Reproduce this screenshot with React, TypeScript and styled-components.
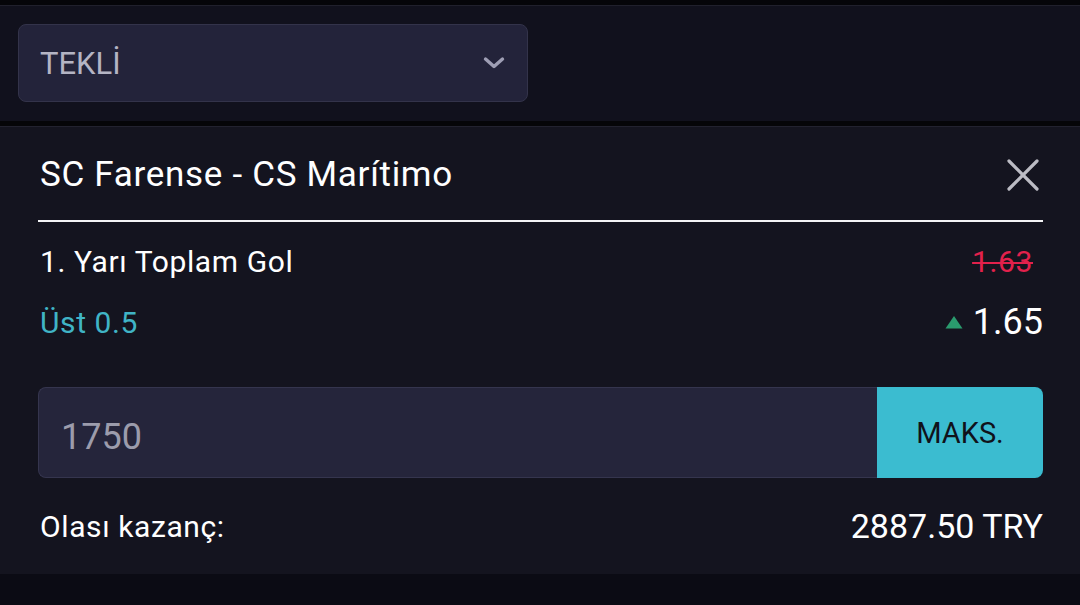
import styled, { createGlobalStyle } from "styled-components";

const GlobalStyle = createGlobalStyle`
  html, body {
    margin: 0;
    padding: 0;
    background: #0b0b14;
    font-family: Roboto, "Noto Sans", "Liberation Sans", sans-serif;
  }
`;

const Page = styled.div`
  display: flex;
  flex-direction: column;
  width: 1080px;
  height: 605px;
  background: #0b0b14;
  overflow: hidden;
`;

const TopStrip = styled.div`
  height: 5px;
  background: #050509;
`;

const Header = styled.div`
  display: flex;
  padding: 18px 18px 19px;
  background: #11111d;
  border-top: 1px solid #20202c;
`;

const Dropdown = styled.div`
  display: flex;
  align-items: center;
  justify-content: space-between;
  box-sizing: border-box;
  width: 510px;
  height: 78px;
  padding: 0 22px 0 21px;
  background: #23233a;
  border: 1px solid #33334a;
  border-radius: 8px;
  color: #b4b4c4;
  font-size: 31px;
`;

const Gap = styled.div`
  height: 5px;
  background: #050508;
`;

const Card = styled.div`
  display: flex;
  flex-direction: column;
  padding: 0 37px 29px 38px;
  background: #14141f;
  border-top: 1px solid #22222f;
`;

const TitleRow = styled.div`
  display: flex;
  align-items: center;
  justify-content: space-between;
  height: 93px;
  padding: 2px 0 0 2px;
  box-sizing: border-box;
`;

const Title = styled.div`
  color: #ffffff;
  font-size: 35px;
  letter-spacing: 0.7px;
`;

const CloseButton = styled.button`
  display: flex;
  padding: 0;
  margin-right: 4px;
  background: none;
  border: 0;
`;

const Divider = styled.div`
  height: 2px;
  background: #f4f4f6;
`;

const Row = styled.div<{ $top: number; $height: number }>`
  display: flex;
  align-items: center;
  justify-content: space-between;
  margin-top: ${(p) => p.$top}px;
  height: ${(p) => p.$height}px;
  padding-left: 2px;
`;

const Label = styled.span<{ $color?: string }>`
  color: ${(p) => p.$color ?? "#ffffff"};
  font-size: 30px;
  letter-spacing: 0.6px;
`;

const Amount = styled.span`
  color: #ffffff;
  font-size: 34px;
`;

const OldOdd = styled.span`
  margin-right: 10px;
  color: #e2214c;
  font-size: 30px;
  letter-spacing: 0.6px;
  text-decoration: line-through;
  text-decoration-thickness: 2px;
`;

const Odd = styled.span`
  display: flex;
  align-items: center;
  gap: 10px;
  color: #ffffff;
  font-size: 36px;
`;

const StakeBox = styled.div`
  display: flex;
  margin-top: 45px;
  height: 91px;
`;

const StakeInput = styled.div`
  display: flex;
  align-items: center;
  flex: 1;
  padding: 8px 0 0 22px;
  background: #25253b;
  border: 1px solid #35354e;
  border-right: 0;
  border-radius: 8px 0 0 8px;
  color: #9c9cac;
  font-size: 36px;
`;

const MaxButton = styled.button`
  width: 166px;
  background: #3bbcd0;
  border: 0;
  border-radius: 0 8px 8px 0;
  color: #10121a;
  font-family: inherit;
  font-size: 29px;
`;

export default function App() {
  return (
    <Page>
      <GlobalStyle />
      <TopStrip />
      <Header>
        <Dropdown>
          <span>TEKLİ</span>
          <svg width="22" height="14" viewBox="0 0 22 14">
            <path
              d="M2.5 3 L11 10.5 L19.5 3"
              fill="none"
              stroke="#9e9eb4"
              strokeWidth="3.4"
              strokeLinecap="round"
              strokeLinejoin="round"
            />
          </svg>
        </Dropdown>
      </Header>
      <Gap />
      <Card>
        <TitleRow>
          <Title>SC Farense - CS Marítimo</Title>
          <CloseButton aria-label="Kapat">
            <svg width="32" height="32" viewBox="0 0 32 32">
              <path
                d="M2 2 L30 30 M30 2 L2 30"
                stroke="#bcbcc4"
                strokeWidth="3.2"
                strokeLinecap="round"
              />
            </svg>
          </CloseButton>
        </TitleRow>
        <Divider />
        <Row $top={20} $height={38}>
          <Label>1. Yarı Toplam Gol</Label>
          <OldOdd>1.63</OldOdd>
        </Row>
        <Row $top={22} $height={40}>
          <Label $color="#40b4c6">Üst 0.5</Label>
          <Odd>
            <svg width="18" height="14" viewBox="0 0 18 14">
              <path d="M9 1 L17.5 13.5 L0.5 13.5 Z" fill="#2a9b6e" />
            </svg>
            1.65
          </Odd>
        </Row>
        <StakeBox>
          <StakeInput>1750</StakeInput>
          <MaxButton>MAKS.</MaxButton>
        </StakeBox>
        <Row $top={29} $height={38}>
          <Label>Olası kazanç:</Label>
          <Amount>2887.50 TRY</Amount>
        </Row>
      </Card>
    </Page>
  );
}
